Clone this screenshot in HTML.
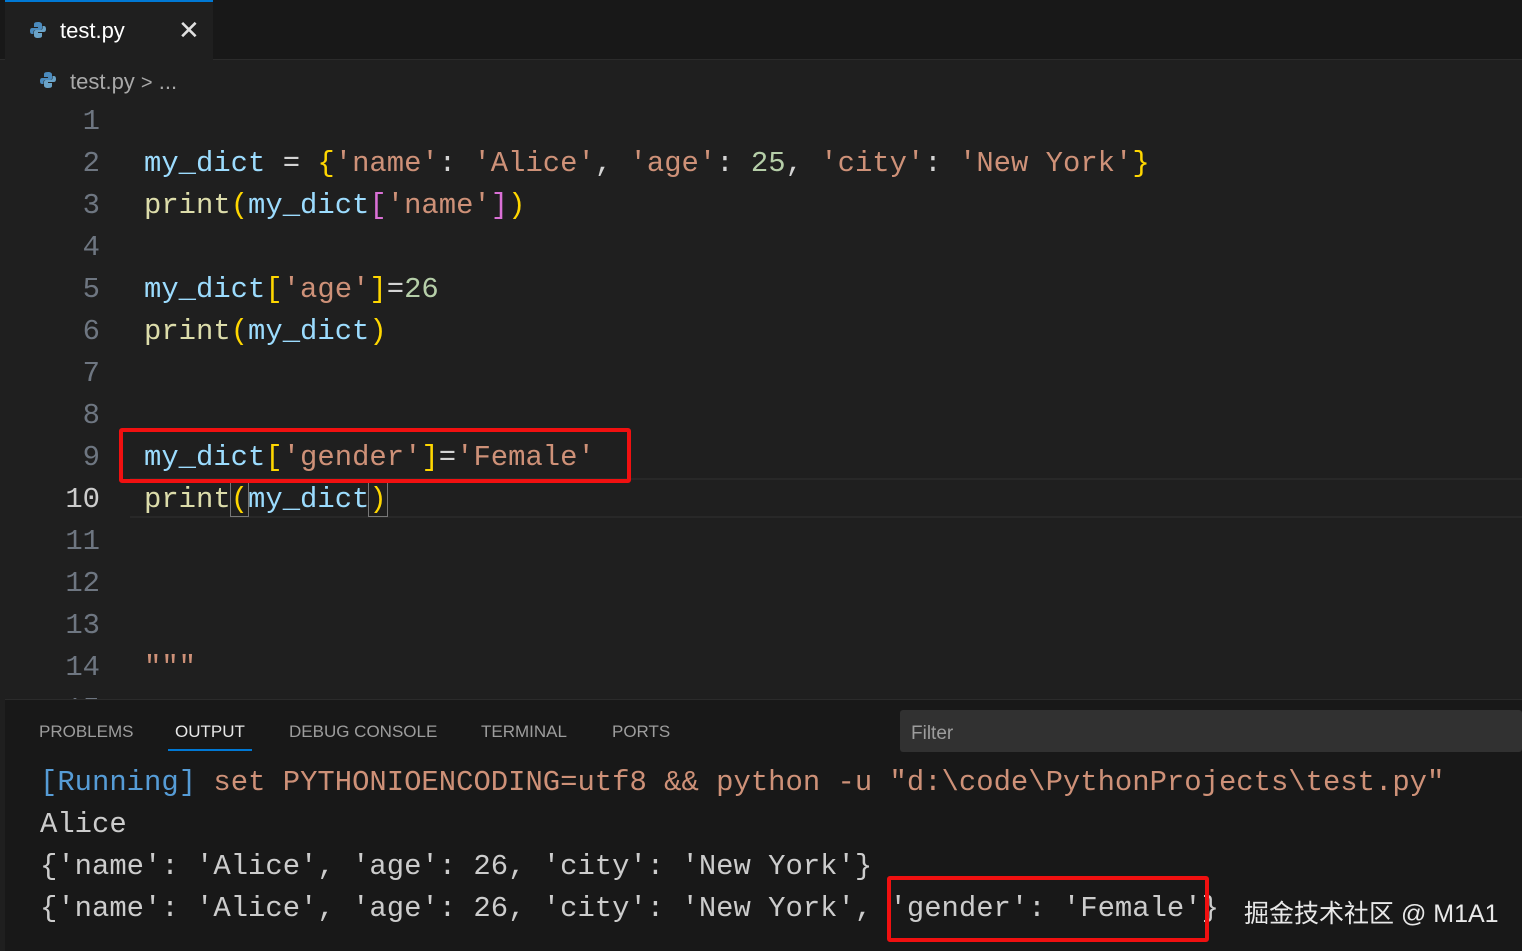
<!DOCTYPE html>
<html><head><meta charset="utf-8"><style>
*{margin:0;padding:0;box-sizing:border-box}
body{width:1522px;height:951px;background:#1f1f1f;position:relative;overflow:hidden;font-family:"Liberation Sans",sans-serif}
.tabbar{position:absolute;left:0;top:0;width:1522px;height:60px;background:#181818;border-bottom:1px solid #2b2b2b}
.tab{position:absolute;left:5px;top:0;width:208px;height:61px;background:#1f1f1f;border-top:2px solid #0078d4}
.mono{font-family:"Liberation Mono",monospace;font-size:28.9px;white-space:pre}
.ln{position:absolute;left:0;width:100px;text-align:right;color:#6e7681;line-height:42px}
.code{position:absolute;left:144px;line-height:42px}
.v{color:#9cdcfe}.s{color:#ce9178}.y{color:#ffd700}.f{color:#dcdcaa}.n{color:#b5cea8}.p{color:#da70d6}.w{color:#d4d4d4}
.panel{position:absolute;left:5px;top:699px;width:1517px;height:252px;background:#181818;border-top:1px solid #2b2b2b}
.pt{position:absolute;top:722px;font-size:17px;color:#9d9d9d}
.out{position:absolute;left:40px;line-height:42px;color:#cccccc}
.box{position:absolute;border:4px solid #f01010;border-radius:3px}
</style></head><body>
<div class="tabbar"></div>
<div class="tab"></div>
<svg style="position:absolute;left:29px;top:21px" width="18" height="18" viewBox="0 0 18 18"><path d="M9 1c-4 0-4 1.5-4 2.5V6h4v1H3C1.5 7 1 8.5 1 10s.5 3 2 3h1.5v-2.3C4.5 9.5 5.5 9 7 9h4c1 0 2-.8 2-2V3.5C13 2 11.5 1 9 1z" fill="#4b8bbe"/><path d="M9 17c4 0 4-1.5 4-2.5V12H9v-1h6c1.5 0 2-1.5 2-3s-.5-3-2-3h-1.5v2.3C13.5 8.5 12.5 9 11 9H7c-1 0-2 .8-2 2v3.5C5 16 6.5 17 9 17z" fill="#6aa3c8"/></svg>
<div style="position:absolute;left:60px;top:18px;font-size:22px;color:#ffffff">test.py</div>
<div style="position:absolute;left:178px;top:15px;font-size:26px;color:#e0e0e0">✕</div>
<svg style="position:absolute;left:39px;top:71px" width="18" height="18" viewBox="0 0 18 18"><path d="M9 1c-4 0-4 1.5-4 2.5V6h4v1H3C1.5 7 1 8.5 1 10s.5 3 2 3h1.5v-2.3C4.5 9.5 5.5 9 7 9h4c1 0 2-.8 2-2V3.5C13 2 11.5 1 9 1z" fill="#4b8bbe"/><path d="M9 17c4 0 4-1.5 4-2.5V12H9v-1h6c1.5 0 2-1.5 2-3s-.5-3-2-3h-1.5v2.3C13.5 8.5 12.5 9 11 9H7c-1 0-2 .8-2 2v3.5C5 16 6.5 17 9 17z" fill="#6aa3c8"/></svg>
<div style="position:absolute;left:70px;top:69px;font-size:22px;color:#a9a9a9">test.py <span style="font-size:20px">&gt;</span> ...</div>
<div style="position:absolute;left:130px;top:478px;width:1392px;height:40px;border-top:2px solid #282828;border-bottom:2px solid #282828"></div>
<div class="mono ln" style="top:101px">1
2
3
4
5
6
7
8
9
<span style="color:#cccccc">10</span>
11
12
13
14
15</div>
<div class="mono code" style="top:143px"><span class="v">my_dict</span><span class="w"> = </span><span class="y">{</span><span class="s">'name'</span><span class="w">: </span><span class="s">'Alice'</span><span class="w">, </span><span class="s">'age'</span><span class="w">: </span><span class="n">25</span><span class="w">, </span><span class="s">'city'</span><span class="w">: </span><span class="s">'New York'</span><span class="y">}</span>
<span class="f">print</span><span class="y">(</span><span class="v">my_dict</span><span class="p">[</span><span class="s">'name'</span><span class="p">]</span><span class="y">)</span>

<span class="v">my_dict</span><span class="y">[</span><span class="s">'age'</span><span class="y">]</span><span class="w">=</span><span class="n">26</span>
<span class="f">print</span><span class="y">(</span><span class="v">my_dict</span><span class="y">)</span>


<span class="v">my_dict</span><span class="y">[</span><span class="s">'gender'</span><span class="y">]</span><span class="w">=</span><span class="s">'Female'</span>
<span class="f">print</span><span class="y" style="outline:1px solid #777">(</span><span class="v">my_dict</span><span class="y" style="outline:1px solid #777">)</span>



<span class="s">"""</span></div>
<div class="box" style="left:119px;top:428px;width:512px;height:55px"></div>
<div class="panel"></div>
<div class="pt" style="left:39px">PROBLEMS</div>
<div class="pt" style="left:175px;color:#e7e7e7">OUTPUT</div>
<div style="position:absolute;left:168px;top:749px;width:84px;height:2px;background:#0078d4"></div>
<div class="pt" style="left:289px">DEBUG CONSOLE</div>
<div class="pt" style="left:481px">TERMINAL</div>
<div class="pt" style="left:612px">PORTS</div>
<div style="position:absolute;left:900px;top:710px;width:622px;height:42px;background:#313131;border-radius:3px"></div>
<div style="position:absolute;left:911px;top:723px;font-size:19px;color:#9d9d9d">Filter</div>
<div class="mono out" style="top:762px"><span style="color:#569cd6">[Running]</span> <span class="s">set PYTHONIOENCODING=utf8 &amp;&amp; python -u "d:\code\PythonProjects\test.py"</span>
Alice
{'name': 'Alice', 'age': 26, 'city': 'New York'}
{'name': 'Alice', 'age': 26, 'city': 'New York', 'gender': 'Female'}</div>
<div class="box" style="left:887px;top:876px;width:322px;height:66px"></div>
<div style="position:absolute;left:1244px;top:894px;font-size:25px;color:#e8e8e8;font-family:'Liberation Sans','Noto Sans CJK SC',sans-serif">掘金技术社区 @ M1A1</div>
</body></html>
